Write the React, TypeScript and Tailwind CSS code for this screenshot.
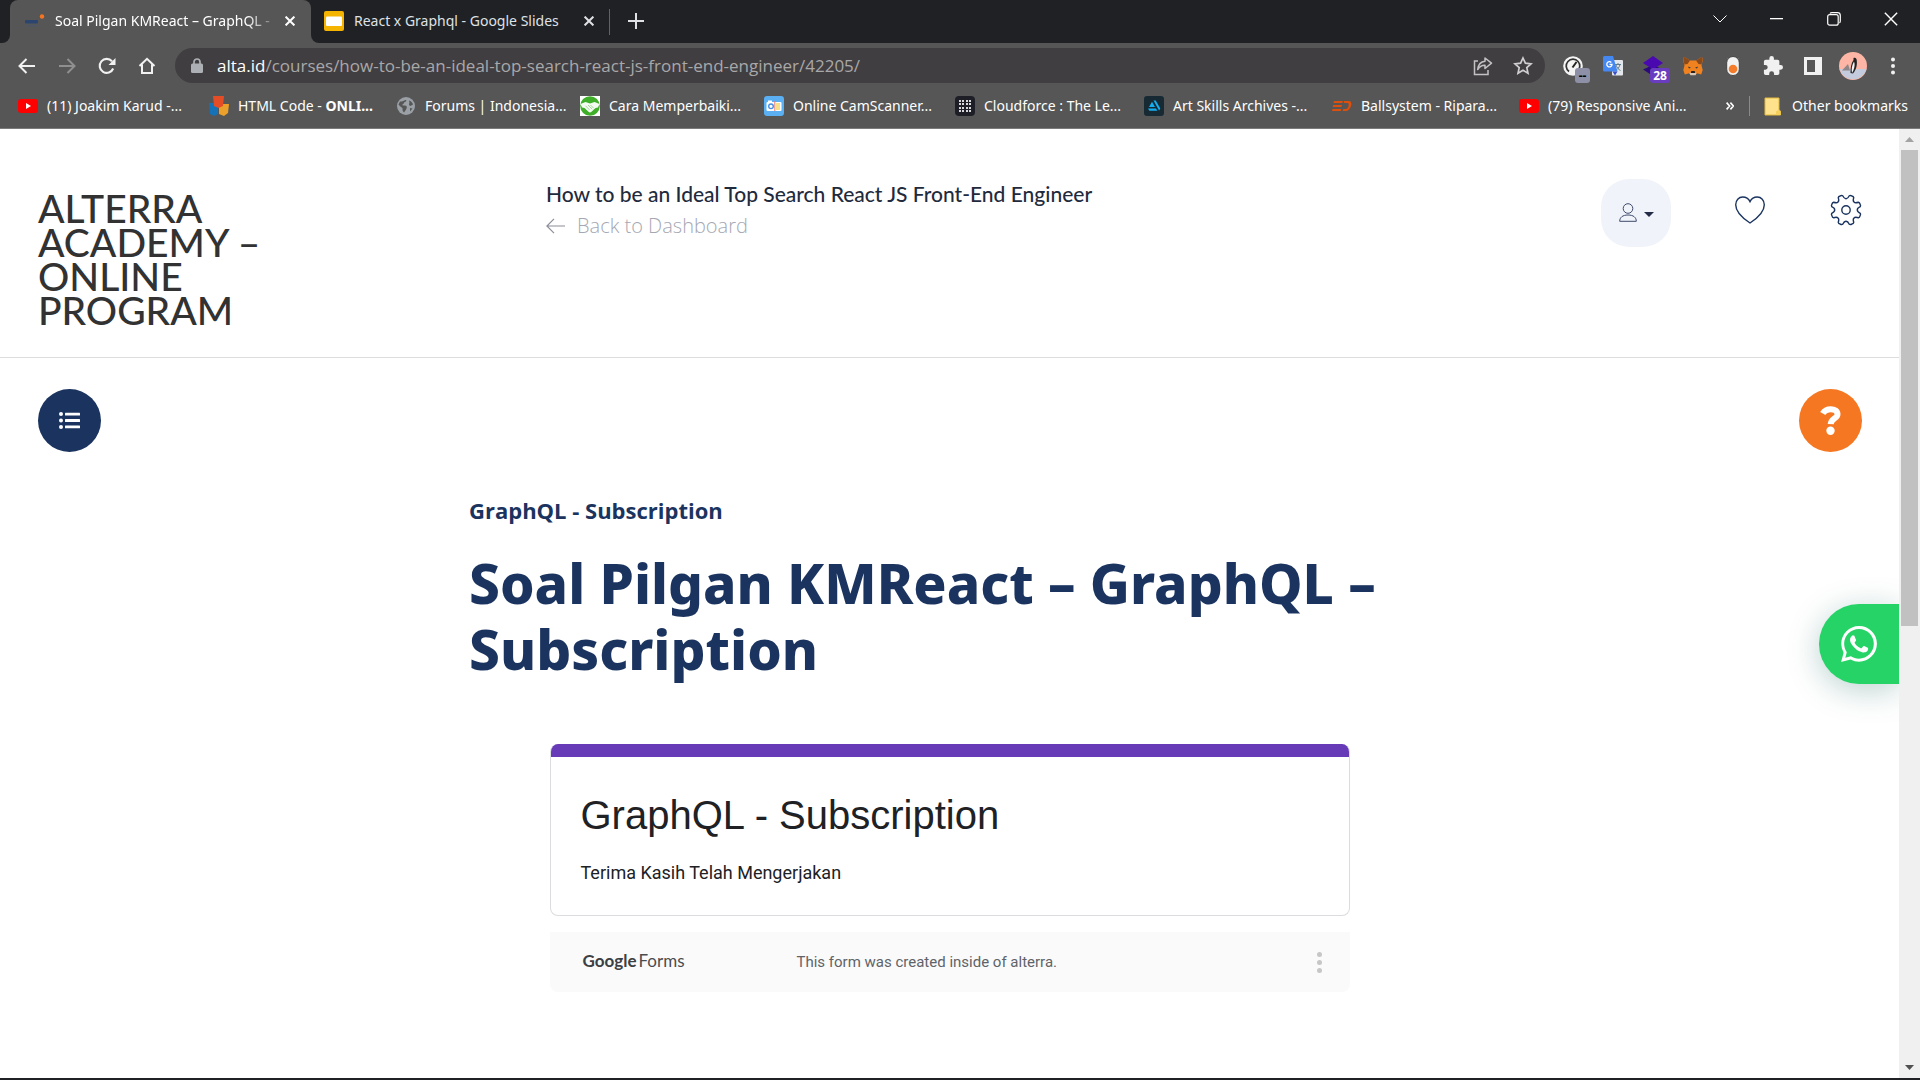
import React from "react";

const AltaIcon = () => (
  <svg width="20" height="20" viewBox="0 0 20 20" aria-hidden="true">
    <rect x="0" y="9" width="13" height="3.4" rx="1" fill="#2b456f" />
    <rect x="2" y="14" width="10" height="1.4" fill="#4d5666" />
    <circle cx="17" cy="5.500" r="2.2" fill="#f47521" />
  </svg>
);

const SlidesIcon = () => (
  <svg width="20" height="20" viewBox="0 0 20 20" aria-hidden="true">
    <rect width="20" height="20" rx="2" fill="#f5b400" />
    <rect x="2" y="5.500" width="16" height="9.500" rx="1" fill="#fff" />
  </svg>
);

const Cross = ({ size = 10, w = 2 }: { size?: number; w?: number }) => (
  <svg width={size} height={size} viewBox="0 0 10 10" stroke="currentColor" strokeWidth={w} fill="none" aria-hidden="true">
    <path d="M0.600 0.600 9.400 9.400M9.400 0.600 0.600 9.400" />
  </svg>
);

const YouTube = () => (
  <svg width="20" height="20" viewBox="0 0 20 20" aria-hidden="true">
    <rect y="3" width="20" height="14" rx="3" fill="#f00" />
    <path d="M8 7v6l5-3z" fill="#fff" />
  </svg>
);
const HtmlCode = () => (
  <svg width="20" height="20" viewBox="0 0 20 20" aria-hidden="true">
    <path d="M0 7h9v11l-4 2-4-2z" fill="#1572b6" />
    <path d="M10 8h10l-1 9-4 3-5-2z" fill="#eca02c" />
    <path d="M4 0h11l-1 10-4.500 2L5 10z" fill="#e44d26" />
  </svg>
);
const Globe = () => (
  <svg width="20" height="20" viewBox="0 0 20 20" aria-hidden="true">
    <circle cx="10" cy="10" r="9" fill="#9aa0a6" />
    <path d="M4 5.500c2 .2 3.500-.5 5.500-1.500 1.500-.2 1 1.500-.5 2-1.500.4-1 2-2.500 2.500-1 1 1.500 1.200 2.500 1 1.500 0 2.500 1.500 1.500 3-.5 1.500-1.500 2.500-2.500 4-1.500-1-1.500-3-1.500-4.500C5 11 3 9.500 2.500 8.500zM13 4.500c2 .5 3.500 2 4 4l-2.500 1.500c-1.500-.5-2-2-1-3zM14 12l2.500.5-2.500 3z" fill="#565656" />
  </svg>
);
const Handshake = () => (
  <svg width="20" height="20" viewBox="0 0 20 20" aria-hidden="true">
    <rect width="20" height="20" fill="#fff" />
    <circle cx="10" cy="10" r="9.800" fill="#3fae29" />
    <path d="M.5 8 5.500 6 10 7.500 14.500 6 19.500 8 18 11.500l-2.500.5-4 3.800c-1 .9-2 .9-3 0L4.500 12 2 11.500z" fill="#f4fbf2" />
    <path d="M5.500 9.800 9.500 13.800M8 9l4.200 4.200M10.500 9l3 3" stroke="#8fd080" strokeWidth=".8" />
  </svg>
);
const CamScanner = () => (
  <svg width="20" height="20" viewBox="0 0 20 20" aria-hidden="true">
    <rect width="20" height="20" rx="3" fill="#5ab0f3" />
    <rect x="2.500" y="6" width="15" height="9" rx="1" fill="#fff" />
    <rect x="4" y="4.500" width="4" height="2" fill="#fff" />
    <circle cx="7" cy="10.300" r="2.300" fill="none" stroke="#4a90e2" strokeWidth="1.400" />
    <path d="M10.800 5v10" stroke="#e77" />
    <rect x="12" y="7" width="4" height="7" fill="#f8e08a" />
  </svg>
);
const Cloudforce = () => (
  <svg width="20" height="20" viewBox="0 0 20 20" aria-hidden="true">
    <rect width="20" height="20" rx="4" fill="#1d1e26" />
    {[4, 7, 11, 14].map((y) => [4, 7, 11, 14].map((x) => <rect key={`${x}-${y}`} x={x} y={y} width="2" height="2" fill="#d8d8da" />))}
  </svg>
);
const ArtStation = () => (
  <svg width="20" height="20" viewBox="0 0 20 20" aria-hidden="true">
    <rect width="20" height="20" rx="3" fill="#172a34" />
    <path d="M4 12.500h8l1.300 2.300H5.300zM5 11l3-5.200L11 11zM9.500 4.500h2.200l4.600 8-1.200 2z" fill="#13aff0" />
  </svg>
);
const Ballsystem = () => (
  <svg width="20" height="20" viewBox="0 0 20 20" fill="#dc4f0c" aria-hidden="true">
    <path d="M2 5h9l-.8 2H1.300zM1.300 9H10l-.7 2H.600zM.5 13h9l-.8 2H0zM12 5h4.500C19 5 20 7 19 10s-3 5-5.500 5h-3l.8-2h2.200c1.500 0 2.500-1 3-3s0-3-1.200-3h-3.600z" />
  </svg>
);

const bookmarks: { text: React.ReactNode; icon: React.ReactNode; w: string }[] = [
  { text: "(11) Joakim Karud -...", icon: <YouTube />, w: "w-[191px]" },
  { text: <>HTML Code - <b>ONLI...</b></>, icon: <HtmlCode />, w: "w-[187px]" },
  { text: "Forums | Indonesia...", icon: <Globe />, w: "w-[184px]" },
  { text: "Cara Memperbaiki...", icon: <Handshake />, w: "w-[184px]" },
  { text: "Online CamScanner...", icon: <CamScanner />, w: "w-[191px]" },
  { text: "Cloudforce : The Le...", icon: <Cloudforce />, w: "w-[189px]" },
  { text: "Art Skills Archives -...", icon: <ArtStation />, w: "w-[188px]" },
  { text: "Ballsystem - Ripara...", icon: <Ballsystem />, w: "w-[187px]" },
  { text: "(79) Responsive Ani...", icon: <YouTube />, w: "w-[187px]" },
];

function TabStrip() {
  return (
    <div className="flex h-[43px] shrink-0 bg-[#202124] font-['Noto_Sans',sans-serif] text-sm text-[#dfe1e5]">
      <div className="w-[10px] bg-[#565656]">
        <div className="h-full w-full rounded-br-lg bg-[#202124]" />
      </div>
      <div className="bg-[#202124]">
        <div className="flex h-full w-[301px] items-center rounded-t-lg bg-[#565656] pb-[2px] pl-[15px] text-white">
          <AltaIcon />
          <span className="ml-[10px] w-[225px] whitespace-nowrap [mask-image:linear-gradient(to_right,black_85%,transparent)]">
            Soal Pilgan KMReact – GraphQL -
          </span>
          <button aria-label="Close tab" className="flex size-5 items-center justify-center"><Cross /></button>
        </div>
      </div>
      <div className="bg-[#565656]">
        <div className="flex h-full items-center rounded-bl-lg bg-[#202124] pb-[2px] pl-[13px]">
          <SlidesIcon />
          <span className="ml-[10px] w-[214px] whitespace-nowrap">React x Graphql - Google Slides</span>
          <button aria-label="Close tab" className="ml-[11px] flex size-5 items-center justify-center"><Cross /></button>
        </div>
      </div>
      <div className="ml-[10px] mt-[9px] h-[26px] w-px bg-[#5f6368]" />
      <button aria-label="New tab" className="ml-[18px] flex items-center pb-px">
        <svg width="16" height="16" viewBox="0 0 16 16" stroke="currentColor" strokeWidth="2"><path d="M8 0v16M0 8h16" /></svg>
      </button>
      <div className="ml-auto flex items-center pb-[6px] text-white">
        <button aria-label="Search tabs" className="flex h-full w-[57px] items-center justify-center">
          <svg width="14" height="8" viewBox="0 0 14 8" fill="none" stroke="currentColor"><path d="M.5.5 7 7 13.500.5" /></svg>
        </button>
        <button aria-label="Minimize" className="flex h-full w-[57px] items-center justify-center">
          <svg width="13" height="2" viewBox="0 0 13 2"><path d="M0 0h13v1.300H0z" fill="currentColor" /></svg>
        </button>
        <button aria-label="Restore" className="flex h-full w-[57px] items-center justify-center">
          <svg width="14" height="14" viewBox="0 0 14 14" fill="none" stroke="currentColor" strokeWidth="1.200"><rect x=".7" y="2.700" width="10.500" height="10.500" rx="2" /><path d="M3 1.500C3.500.7 4 .7 5 .7h5.500c2 0 2.800 1 2.800 2.800V9c0 1 0 1.500-.9 2" /></svg>
        </button>
        <button aria-label="Close window" className="flex h-full w-[58px] items-center justify-center"><Cross size={14} w={1} /></button>
      </div>
    </div>
  );
}

const iconBtn = "flex w-10 shrink-0 items-center justify-center";

function Toolbar() {
  return (
    <div className="flex h-[45px] shrink-0 items-center bg-[#565656] pl-[7px] pr-[7px] text-[#f1f1f1]">
      <button aria-label="Back" className={iconBtn}>
        <svg width="18" height="16" viewBox="0 0 18 16" fill="none" stroke="currentColor" strokeWidth="2"><path d="M17 8H2M8.500 1 1.500 8l7 7" /></svg>
      </button>
      <button aria-label="Forward" className={`${iconBtn} text-[#8f8f8f]`}>
        <svg width="18" height="16" viewBox="0 0 18 16" fill="none" stroke="currentColor" strokeWidth="2"><path d="M1 8h15M9.500 1l7 7-7 7" /></svg>
      </button>
      <button aria-label="Reload" className={iconBtn}>
        <svg width="18" height="18" viewBox="0 0 18 18"><path d="M15.200 11.500A7 7 0 1 1 14 4.300" fill="none" stroke="currentColor" strokeWidth="2.100" /><path d="M17.500 1v7h-7z" fill="currentColor" /></svg>
      </button>
      <button aria-label="Home" className={iconBtn}>
        <svg width="18" height="18" viewBox="0 0 18 18" fill="none" stroke="currentColor" strokeWidth="2"><path d="M1.500 9 9 1.800 16.500 9M4 7.500V16h10V7.500" /></svg>
      </button>
      <div className="ml-[8px] flex h-[35px] flex-1 items-center rounded-full bg-[#413e41] pl-[15px] pr-[2px]">
        <svg width="14" height="16" viewBox="0 0 14 16" aria-hidden="true"><rect x="1" y="5.500" width="12" height="9.500" rx="1.500" fill="#adb0b4" /><path d="M4 6V4a3 3 0 0 1 6 0v2" fill="none" stroke="#adb0b4" strokeWidth="1.700" /></svg>
        <div className="ml-[13px] flex-1 whitespace-nowrap text-[17px] leading-6 text-[#a9a8a9]"><span className="text-white">alta.id</span>/courses/how-to-be-an-ideal-top-search-react-js-front-end-engineer/42205/</div>
        <button aria-label="Share this page" className="flex w-10 justify-center text-[#c3c2c3]">
          <svg width="20" height="20" viewBox="0 0 20 20" fill="none" stroke="currentColor" strokeWidth="1.500"><path d="M5 5H1.500v13.500H15V14" /><path d="M12 2l6.500 5.200L12 12.500V9.300c-3.500-.1-5.500 1.200-7.300 4.200C5.200 8.500 8 5.600 12 5.200z" strokeLinejoin="round" /></svg>
        </button>
        <button aria-label="Bookmark this tab" className="flex w-10 justify-center text-[#d0cfd0]">
          <svg width="20" height="20" viewBox="0 0 20 20" fill="none" stroke="currentColor" strokeWidth="1.700"><path d="M10 2l2.400 5.200 5.600.6-4.200 3.800 1.200 5.600-5-2.900-5 2.900 1.200-5.600L2 7.800l5.600-.6z" /></svg>
        </button>
      </div>
      <div className="ml-[8px] flex items-center">
        <button aria-label="Page speed" className={`${iconBtn} relative`}>
          <svg width="20" height="20" viewBox="0 0 20 20"><circle cx="10" cy="10" r="9.800" fill="#f4f4f4" /><path d="M6 15.500a6.800 6.800 0 1 1 8 0" fill="none" stroke="#333" strokeWidth="1.700" /><path d="M9.500 11.500 13.500 6" stroke="#222" strokeWidth="2" /></svg>
          <span className="absolute left-[22px] top-[12px] h-[15px] w-[15px] rounded-[3px] bg-[#8d90a6] text-center text-xs font-bold leading-[15px] text-black">--</span>
        </button>
        <button aria-label="Translate" className={iconBtn}>
          <svg width="20" height="20" viewBox="0 0 20 20"><rect x="9" y="4" width="11" height="15.500" rx="1" fill="#e3e6ea" /><path d="M12 8.500h6M15 7v1.500M17 8.500c-.7 3-2.500 5-4.500 6M13 9c.8 2.500 2.500 4.500 4.500 5.500" stroke="#607d8b" fill="none" /><path d="M1.500 0h8.500l4.500 15.500H1.500A1.500 1.500 0 0 1 0 14V1.500A1.500 1.500 0 0 1 1.500 0z" fill="#4688f1" /><path d="M9.500 15.500h5L12 19.500z" fill="#3a4fc4" /><path d="M8.300 6.500A2.600 2.600 0 1 0 9 8.400H6.500" fill="none" stroke="#fff" strokeWidth="1.300" /></svg>
        </button>
        <button aria-label="Layers" className={`${iconBtn} relative`}>
          <svg width="20" height="20" viewBox="0 0 20 20"><path d="M0 13.500 10 9l10 4.500L10 20z" fill="#2b0b78" /><path d="M0 7 10 0l10 7-10 6.500z" fill="#4a08b0" /></svg>
          <span className="absolute left-[17px] top-[12px] h-[15px] w-[20px] rounded-[3px] bg-[#6a3cc0] text-center text-xs font-bold leading-[15px] text-white">28</span>
        </button>
        <button aria-label="MetaMask" className={iconBtn}>
          <svg width="20" height="20" viewBox="0 0 20 20"><path d="M1 .8 7 4.500h6L19 .8l.9 3.200-1.400 5.500 1.200 4.500-1.500 4.500-4.200-1.200L12.500 19h-5L6 17.300l-4.200 1.200L.3 14l1.200-4.500L.1 4z" fill="#f0831f" /><path d="M1 .8 7 4.500 4.500 8 1.500 8.500.3 4zM19 .8 13 4.500 15.500 8l3 .5L19.700 4z" fill="#8a4a1c" /><path d="M6.500 16.800h7l-1 2.400h-5z" fill="#d8c8ba" /><path d="M8.300 15h3.400l.5 2H7.800z" fill="#222" /><path d="m5 10.500 3 1.200-2 .8zM15 10.500l-3 1.200 2 .8z" fill="#24344a" /></svg>
        </button>
        <button aria-label="Toggle" className={iconBtn}>
          <svg width="14" height="20" viewBox="0 0 14 20"><rect x=".7" y=".5" width="12.600" height="19" rx="6.300" fill="#f2f2f2" stroke="#444" /><circle cx="7" cy="13" r="4.300" fill="#f57c2a" /></svg>
        </button>
        <button aria-label="Extensions" className={iconBtn}>
          <svg width="20" height="20" viewBox="1 1 22 22" fill="currentColor"><path d="M20.500 11H19V7a2 2 0 0 0-2-2h-4V3.500a2.500 2.500 0 0 0-5 0V5H4a2 2 0 0 0-2 2v3.800h1.500a2.700 2.700 0 0 1 0 5.400H2V20a2 2 0 0 0 2 2h3.800v-1.500a2.700 2.700 0 0 1 5.400 0V22H17a2 2 0 0 0 2-2v-4h1.500a2.500 2.500 0 0 0 0-5z" /></svg>
        </button>
        <button aria-label="Side panel" className={iconBtn}>
          <svg width="18" height="18" viewBox="0 0 18 18"><path fillRule="evenodd" d="M0 0h18v18H0zM3 3v12h8V3z" fill="currentColor" /></svg>
        </button>
        <button aria-label="Profile" className={iconBtn}>
          <svg width="28" height="28" viewBox="0 0 28 28"><circle cx="14" cy="14" r="14" fill="#fdb5a5" /><path d="M.5 17h27a14 14 0 0 1-27 0z" fill="#c3cbdc" /><path d="M3 18.500 9 12l2 6.500z" fill="#8d8588" /><path d="M14.500 6c2-.9 3.500.6 3.300 3 .5 4-.8 9.500-3.800 12.500l-2.500-.5c0-5 .5-9.500 3-13z" fill="#222" /><path d="M15 9.500c1.300 3 .3 8-2 11.500-.8-4 0-8 2-11.500z" fill="#f2f2f2" /></svg>
        </button>
        <button aria-label="Menu" className={iconBtn}>
          <svg width="4" height="18" viewBox="0 0 4 18" fill="currentColor"><circle cx="2" cy="2.500" r="2" /><circle cx="2" cy="9" r="2" /><circle cx="2" cy="15.500" r="2" /></svg>
        </button>
      </div>
    </div>
  );
}

function BookmarksBar() {
  return (
    <nav aria-label="Bookmarks" className="flex shrink-0 items-center border-b border-[#7b7b7b] bg-[#565656] pb-1 pl-[18px] pr-[12px] font-['Noto_Sans',sans-serif] text-sm text-white">
      <div className="flex h-9 min-w-0 flex-1 items-center overflow-hidden">
        {bookmarks.map((b, i) => (
          <a key={i} href="#" className={`flex shrink-0 items-center gap-[9px] whitespace-nowrap ${b.w}`}>{b.icon}<span>{b.text}</span></a>
        ))}
      </div>
      <button aria-label="More bookmarks" className="mr-[15px]">
        <svg width="8" height="8" viewBox="0 0 8 8" fill="none" stroke="currentColor" strokeWidth="1.600"><path d="m.6.6 3 3.400-3 3.400M4.400.6l3 3.400-3 3.400" /></svg>
      </button>
      <div className="mr-[14px] h-5 w-px bg-[#8a8a8a]" />
      <a href="#" className="flex items-center gap-[11px] whitespace-nowrap">
        <svg width="17" height="19" viewBox="0 0 17 19" aria-hidden="true"><path d="M1 1h14v12l1.500 1v4H1z" fill="#ffe38c" stroke="#e3b93a" /><path d="M12 18v-3.500l2-1.500 2.500 1.500V18z" fill="#f4cf5c" /></svg>
        Other bookmarks
      </a>
    </nav>
  );
}

const Heart = () => (
  <svg width="32" height="30" viewBox="0 0 32 30" fill="none" stroke="#1b345f" strokeWidth="1.400"><path d="M16 28C9 23.500 1.700 17.500 1.700 9.800 1.700 5.200 4.700 2 8.800 2 12 2 14.500 3.600 16 6.600 17.500 3.600 20 2 23.200 2c4.100 0 7.100 3.200 7.100 7.800C30.300 17.500 23 23.500 16 28z" /></svg>
);

const gearPath =
  Array.from({ length: 8 }, (_, i) => {
    const p = (deg: number, r: number) => {
      const a = ((i * 45 + deg) * Math.PI) / 180;
      return `${(16 + r * Math.sin(a)).toFixed(2)} ${(16 - r * Math.cos(a)).toFixed(2)}`;
    };
    return `${i ? "L" : "M"}${p(-13, 14.600)}Q${p(-9, 11.300)} ${p(0, 11.300)}Q${p(9, 11.300)} ${p(13, 14.600)}Q${p(16, 15.600)} ${p(22.5, 15.200)}Q${p(29, 15.600)} ${p(32, 14.600)}`;
  }).join("") + "Z";

const Gear = () => (
  <svg width="32" height="32" viewBox="0 0 32 32" fill="none" stroke="#1b345f" strokeWidth="1.400" strokeLinejoin="round"><path d={gearPath} /><circle cx="16" cy="16" r="4.200" /></svg>
);

function Header() {
  return (
    <header className="flex items-start border-b border-[#dcdede] pl-[38px] pr-[37px] font-[Lato,sans-serif]">
      <div className="w-[508px] shrink-0 pb-[30px] pt-[62px]">
        <a href="#" className="block w-[260px] text-[39px] font-medium leading-[34px] text-[#323232]">ALTERRA ACADEMY – ONLINE PROGRAM</a>
      </div>
      <div className="flex-1 pt-[50px]">
        <h2 className="text-[21px] font-medium leading-[30px] text-[#1f2b3d]">How to be an Ideal Top Search React JS Front-End Engineer</h2>
        <a href="#" className="mt-px flex items-center gap-[12px] font-['Open_Sans',sans-serif] text-[20px] font-light leading-8 text-[#a5a8b2]">
          <svg width="19" height="16" viewBox="0 0 19 16" fill="none" stroke="#8b8e99" strokeWidth="1.200"><path d="M19 8H1M8 .8.9 8 8 15.200" /></svg>
          Back to Dashboard
        </a>
      </div>
      <div className="flex items-start pt-[50px]">
        <button aria-label="Account" className="flex h-[68px] w-[70px] items-center justify-center gap-[7px] rounded-[28px] bg-[#f0f3fa] pb-[2px]">
          <svg width="18" height="19" viewBox="0 0 18 19" fill="none" stroke="#3f4a6b"><circle cx="9" cy="5.500" r="4.800" /><path d="M.7 18.300C.7 14.500 3.500 12 9 12s8.300 2.500 8.300 6.300z" /></svg>
          <svg className="mt-1" width="10" height="5" viewBox="0 0 10 5"><path d="M0 0h10L5 5z" fill="#252c48" /></svg>
        </button>
        <div className="flex h-[62px] items-center">
          <button aria-label="Favourites" className="ml-[63px]"><Heart /></button>
          <button aria-label="Settings" className="ml-[64px]"><Gear /></button>
        </div>
      </div>
    </header>
  );
}

function FormCard() {
  return (
    <div className="mx-auto mt-[62px] max-w-[800px]">
      <section className="overflow-hidden rounded-lg border border-t-0 border-[#dadce0]">
        <div className="-mx-px h-[13px] bg-[#673ab7]" />
        <div className="px-[30px] pb-[28px] pt-[33px] text-[#202124]">
          <h3 className="font-['Liberation_Sans',sans-serif] text-[40px] leading-[50px]">GraphQL - Subscription</h3>
          <p className="mt-[19px] font-[Roboto,sans-serif] text-lg">Terima Kasih Telah Mengerjakan</p>
        </div>
      </section>
      <footer className="mt-[16px] flex h-[60px] items-center rounded-b-lg bg-[#fafafa] pl-[33px] pr-[28px] font-[Roboto,sans-serif] text-[15px] text-[#5f6368]">
        <div className="w-[214px] shrink-0 pb-[2px] font-[Lato,sans-serif] text-[17px] text-[#4a4c4f]">
          <span className="mr-[2px] font-bold text-[#3c4043]">Google</span><span>Forms</span>
        </div>
        <p className="flex-1">This form was created inside of alterra.</p>
        <button aria-label="Form options"><svg width="5" height="21" viewBox="0 0 5 21" fill="#c6c6c6"><circle cx="2.500" cy="2.500" r="2.500" /><circle cx="2.500" cy="10.500" r="2.500" /><circle cx="2.500" cy="18.500" r="2.500" /></svg></button>
      </footer>
    </div>
  );
}

function Scrollbar() {
  return (
    <div className="flex w-[21px] shrink-0 flex-col items-center bg-[#f0f0f0]" aria-hidden="true">
      <div className="flex h-[21px] items-center justify-center"><svg width="9" height="5" viewBox="0 0 9 5"><path d="M4.500 0 9 5H0z" fill="#a3a3a3" /></svg></div>
      <div className="w-full flex-1 px-[2px]"><div className="h-[52.500%] bg-[#c1c1c1]" /></div>
      <div className="flex h-[21px] items-center justify-center"><svg width="9" height="5" viewBox="0 0 9 5"><path d="M0 0h9L4.500 5z" fill="#505050" /></svg></div>
    </div>
  );
}

export default function App() {
  return (
    <div className="flex h-screen flex-col overflow-hidden border-b-2 border-[#202124] bg-white font-['Open_Sans',sans-serif]">
      <TabStrip />
      <Toolbar />
      <BookmarksBar />
      <div className="flex min-h-0 flex-1">
        <main className="relative min-w-0 flex-1 overflow-hidden">
          <Header />
          <div className="flex justify-between pl-[38px] pr-[37px] pt-[31px]">
            <button aria-label="Lesson list" className="flex size-[63px] items-center justify-center rounded-full bg-[#1b345f]">
              <svg width="21" height="17" viewBox="0 0 21 17" fill="#fff"><circle cx="2" cy="2" r="2" /><circle cx="2" cy="8.500" r="2" /><circle cx="2" cy="15" r="2" /><rect x="6" y=".7" width="15" height="2.800" rx=".5" /><rect x="6" y="7.100" width="15" height="2.800" rx=".5" /><rect x="6" y="13.500" width="15" height="2.800" rx=".5" /></svg>
            </button>
            <button aria-label="Help" className="flex size-[63px] items-center justify-center rounded-full bg-[#f57722]">
              <svg width="22" height="29" viewBox="0 0 22 29"><path d="M2.800 7.500C4.500 4.500 7.500 3.200 10.800 3.200c3.800 0 6.700 1.800 6.700 5 0 4.300-6.500 4.200-6.800 10" fill="none" stroke="#fff" strokeWidth="6" /><circle cx="10.500" cy="24.800" r="4.200" fill="#fff" /></svg>
            </button>
          </div>
          <article className="mx-auto mt-[40px] max-w-[961px] text-[#1b345f]">
            <h2 className="text-[22px] font-bold leading-[36px]">GraphQL - Subscription</h2>
            <h1 className="mt-[22px] font-['Noto_Sans',sans-serif] text-[55px] font-extrabold leading-[66px]">Soal Pilgan KMReact – GraphQL – Subscription</h1>
            <FormCard />
          </article>
          <a href="#" aria-label="Chat on WhatsApp" className="absolute right-0 top-[475px] flex h-20 w-20 items-center rounded-l-full bg-[#25d366] pl-[22px] shadow-[0_6px_32px_rgba(7,94,84,0.28)]">
            <svg width="36" height="36" viewBox="0 0 24 24" fill="#fff"><path d="M17.472 14.382c-.297-.149-1.758-.867-2.030-.967-.273-.099-.471-.148-.670.150-.197.297-.767.966-.940 1.164-.173.199-.347.223-.644.075-.297-.150-1.255-.463-2.390-1.475-.883-.788-1.480-1.761-1.653-2.059-.173-.297-.018-.458.130-.606.134-.133.298-.347.446-.520.149-.174.198-.298.298-.497.099-.198.050-.371-.025-.520-.075-.149-.669-1.612-.916-2.207-.242-.579-.487-.500-.669-.510-.173-.008-.371-.010-.570-.010-.198 0-.520.074-.792.372-.272.297-1.040 1.016-1.040 2.479 0 1.462 1.065 2.875 1.213 3.074.149.198 2.096 3.200 5.077 4.487.709.306 1.262.489 1.694.625.712.227 1.360.195 1.871.118.571-.085 1.758-.719 2.006-1.413.248-.694.248-1.289.173-1.413-.074-.124-.272-.198-.570-.347z" /><path fillRule="evenodd" d="M.057 24l1.687-6.163A11.900 11.900 0 0 1 .160 11.892C.160 5.335 5.495 0 12.050 0a11.817 11.817 0 0 1 8.413 3.488 11.824 11.824 0 0 1 3.480 8.414c0 6.557-5.338 11.892-11.893 11.892a11.900 11.900 0 0 1-5.688-1.448zM6.597 20.193c1.676.995 3.276 1.591 5.392 1.592 5.448 0 9.886-4.434 9.889-9.885.002-5.462-4.415-9.890-9.881-9.892-5.452 0-9.887 4.434-9.889 9.884 0 2.225.651 3.891 1.746 5.634l-.999 3.648z" /></svg>
          </a>
        </main>
        <Scrollbar />
      </div>
    </div>
  );
}
